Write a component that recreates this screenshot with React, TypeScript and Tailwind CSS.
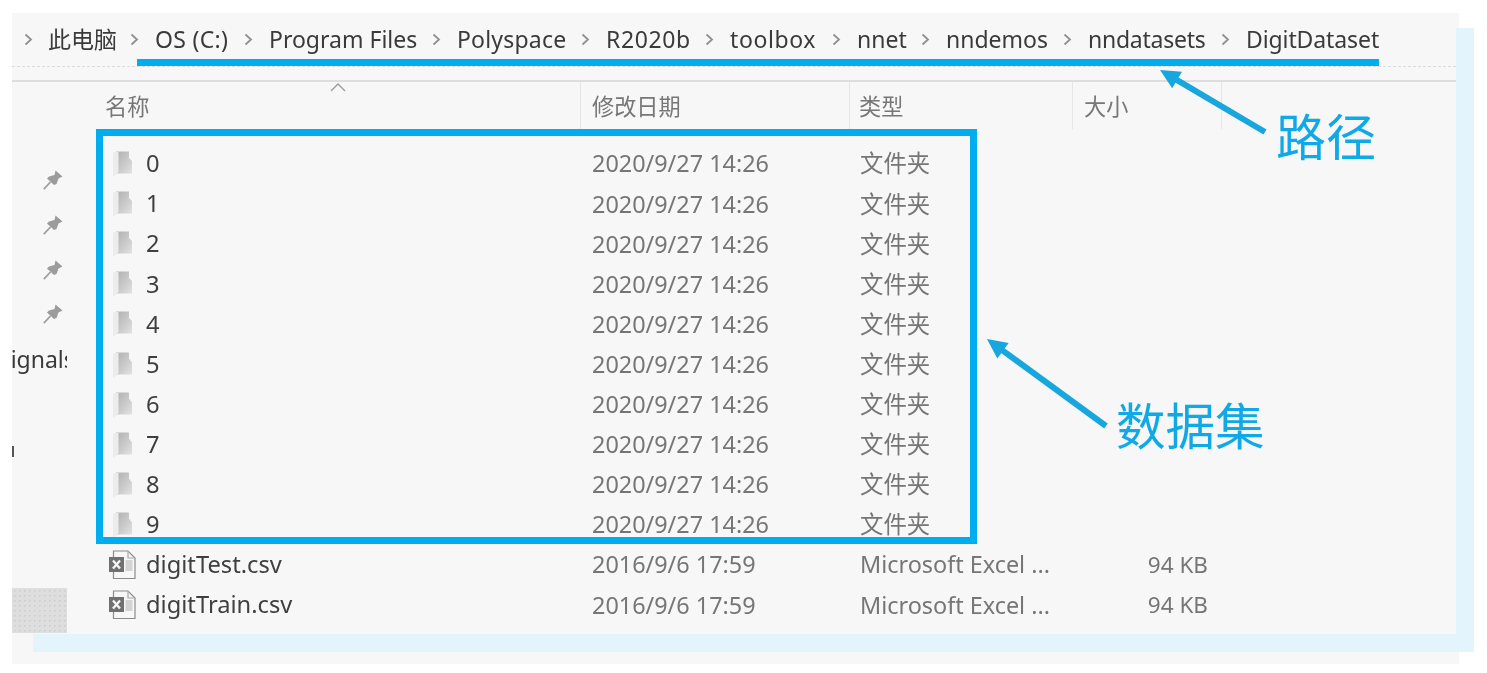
import React from "react";

const latin = "font-['Noto_Sans','Noto_Sans_CJK_SC',sans-serif]";

const crumbs = [
  { t: "此电脑", c: "w-[66.5px]" },
  { t: "OS (C:)", c: "w-[73.5px] tracking-[0.3px]" },
  { t: "Program Files", c: "w-[147.5px]" },
  { t: "Polyspace", c: "w-[108.5px] tracking-[0.2px]" },
  { t: "R2020b", c: "w-[83.5px] tracking-[0.6px]" },
  { t: "toolbox", c: "w-[86.5px] tracking-[0.6px]" },
  { t: "nnet", c: "w-[48.5px]" },
  { t: "nndemos", c: "w-[101.5px]" },
  { t: "nndatasets", c: "w-[117.5px] tracking-[-0.25px]" },
  { t: "DigitDataset", c: "w-[133px] tracking-[-0.1px]" },
];
const folders = ["0", "1", "2", "3", "4", "5", "6", "7", "8", "9"];

function Chevron() {
  return (
    <svg width="9" height="13" viewBox="0 0 9 13" className="shrink-0">
      <path d="M1.5 1.5 L7 6.5 L1.5 11.5" fill="none" stroke="#909090" strokeWidth="1.8" />
    </svg>
  );
}

function Pin() {
  return (
    <svg width="20" height="20" viewBox="0 0 20 20">
      <path d="M0.8 19.2 L7.5 12" stroke="#a0a0a0" strokeWidth="1.8" fill="none" />
      <path d="M12.5 0.5 L19.5 6.5 L15.5 8.5 L13.5 14 L11 15 L4 8.5 L6 6.5 L11.5 5 Z" fill="#9c9c9c" />
    </svg>
  );
}

function FolderIcon() {
  return (
    <svg width="20" height="26" viewBox="0 0 20 26">
      <defs>
        <linearGradient id="fb" x1="0" y1="0" x2="1" y2="1">
          <stop offset="0" stopColor="#b0b0b0" />
          <stop offset="0.55" stopColor="#cacaca" />
          <stop offset="1" stopColor="#e2e2e2" />
        </linearGradient>
      </defs>
      <path d="M3 0.5 H16 V7 L19 10 V22.5 H3 Z" fill="url(#fb)" />
      <path d="M0 1.5 L5.5 0.5 V21 L1 25.5 H0 Z" fill="#ececec" />
    </svg>
  );
}

function ExcelIcon() {
  return (
    <svg width="27" height="30" viewBox="0 0 27 30">
      <path d="M4.5 8 V1 H19 L26 8 V28.5 H4.5 V21" fill="none" stroke="#8c8c8c" strokeWidth="1.2" />
      <path d="M19 1 V8 H26" fill="none" stroke="#a8a8a8" strokeWidth="1.2" />
      <rect x="0" y="7" width="15" height="15" fill="#707070" />
      <path d="M4 10.5 L11 18.5 M11 10.5 L4 18.5" stroke="#f4f4f4" strokeWidth="2.4" />
      <rect x="16.5" y="10" width="7" height="11" fill="#d4d4d4" />
    </svg>
  );
}

function Row({ name, date, type, size, file }: { name: string; date: string; type: string; size?: string; file?: boolean }) {
  return (
    <div className="flex h-[40.1px] items-center text-[23.4px] text-[#767676]">
      <div className={file ? "flex w-[50px] shrink-0 items-center pl-[13px]" : "flex w-[50px] shrink-0 items-center pl-[17px]"}>
        {file ? <ExcelIcon /> : <FolderIcon />}
      </div>
      <div className="w-[446px] shrink-0 text-[23.7px] text-[#3f3f3f]">{name}</div>
      <div className="w-[268px] shrink-0">{date}</div>
      <div className="w-[214px] shrink-0 whitespace-nowrap">{type}</div>
      <div className="w-[134px] shrink-0 text-right text-[22.5px]">{size}</div>
    </div>
  );
}

function HeaderCell({ label, cellClass }: { label: string; cellClass: string }) {
  return (
    <div className={`${cellClass} flex h-[47px] shrink-0 items-start border-r border-[#e6e6e6] pt-[8px] text-[22.2px] text-[#777777]`}>
      {label}
    </div>
  );
}

function Arrow({ x1, y1, x2, y2 }: { x1: number; y1: number; x2: number; y2: number }) {
  const a = Math.atan2(y2 - y1, x2 - x1);
  const len = 22;
  const spread = 0.45;
  const p1 = `${x2 - len * Math.cos(a - spread)},${y2 - len * Math.sin(a - spread)}`;
  const p2 = `${x2 - len * Math.cos(a + spread)},${y2 - len * Math.sin(a + spread)}`;
  return (
    <g>
      <line x1={x1} y1={y1} x2={x2 - 12 * Math.cos(a)} y2={y2 - 12 * Math.sin(a)} stroke="#17a6dd" strokeWidth="6" />
      <polygon points={`${x2},${y2} ${p1} ${p2}`} fill="#17a6dd" />
    </g>
  );
}

export default function App() {
  return (
    <div className={`relative h-[673px] w-[1487px] overflow-hidden bg-white ${latin}`}>
      <div className="relative ml-3 mt-[13px] h-[651px] w-[1447px] bg-[#f7f7f7]">
        {/* pale blue backing card */}
        <div className="absolute left-[21px] top-[15px] h-[624px] w-[1441px] bg-[#e3f4fc]" />
        <div className="absolute left-0 top-0 h-[621px] w-[1444px] bg-[#f7f7f7]" />

        <div className="relative flex h-[621px] w-[1444px] flex-col blur-[0.45px]">
          {/* breadcrumb */}
          <div className="flex h-[54px] shrink-0 items-center whitespace-nowrap border-b border-dashed border-[#dcdcdc] pb-[1px] text-[23px] text-[#3a3a3a]">
            {crumbs.map((c, i) => (
              <React.Fragment key={c.t}>
                <div className={i === 0 ? "flex w-[36px] shrink-0 justify-center pr-[4px]" : "flex w-[40.5px] shrink-0 justify-center"}>
                  <Chevron />
                </div>
                <span className={`${c.c} shrink-0`}>{c.t}</span>
              </React.Fragment>
            ))}
          </div>
          {/* ribbon strip */}
          <div className="h-[15px] shrink-0 border-b-2 border-[#dedede]" />

          <div className="flex min-h-0 flex-1">
            {/* nav pane */}
            <div className="w-[84px] shrink-0 overflow-hidden">
              <div className="flex h-[342px] flex-col items-end pr-[33px] pt-[76px]">
                <div className="flex h-[44.7px] items-center"><Pin /></div>
                <div className="flex h-[44.7px] items-center"><Pin /></div>
                <div className="flex h-[44.7px] items-center"><Pin /></div>
                <div className="flex h-[44.7px] items-center"><Pin /></div>
              </div>
              <div className="-mt-[81px] h-[32px] w-[55px] overflow-hidden whitespace-nowrap text-[23px] leading-[32px] text-[#3a3a3a]">
                <span className="-ml-[14px] inline-block">Signals</span>
              </div>
              <div className="mt-[71px] h-[11px] w-[2px] bg-[#555555]" />
              <div className="mt-[131px] h-[45px] w-[55px] bg-[#dedede] bg-[radial-gradient(#d0d0d0_1px,transparent_1px)] bg-[length:5px_5px]" />
            </div>

            {/* file list */}
            <div className="min-w-0 flex-1">
              <div className="relative flex h-[62px] items-start">
                <HeaderCell label="名称" cellClass="w-[485px] pl-[9px]" />
                <HeaderCell label="修改日期" cellClass="w-[269px] pl-[11px]" />
                <HeaderCell label="类型" cellClass="w-[223px] pl-[9px]" />
                <HeaderCell label="大小" cellClass="w-[149px] pl-[11px]" />
                <svg width="16" height="9" viewBox="0 0 16 9" className="absolute left-[234px] top-[1px]">
                  <path d="M1 8 L8 1 L15 8" fill="none" stroke="#9a9a9a" strokeWidth="1.3" />
                </svg>
              </div>
              {folders.map((f) => (
                <Row key={f} name={f} date="2020/9/27 14:26" type="文件夹" />
              ))}
              <Row file name="digitTest.csv" date="2016/9/6 17:59" type="Microsoft Excel ..." size="94 KB" />
              <Row file name="digitTrain.csv" date="2016/9/6 17:59" type="Microsoft Excel ..." size="94 KB" />
            </div>
          </div>
        </div>

        {/* annotations over the screenshot */}
        <div className="absolute left-[125px] top-[46px] h-[7px] w-[1242px] bg-[#00aeef]" />
        <div className="absolute left-[84px] top-[116px] h-[415px] w-[881px] border-[7px] border-[#00aeef]" />
        <svg className="absolute left-0 top-0" width="1447" height="651" viewBox="0 0 1447 651">
          <Arrow x1={1253} y1={119} x2={1148} y2={57} />
          <Arrow x1={1094} y1={413} x2={975} y2={326} />
        </svg>
        <div className="absolute left-[1264px] top-[92px] text-[50px] leading-[64px] text-[#0ea9e6]">路径</div>
        <div className="absolute left-[1104px] top-[381px] text-[49.5px] leading-[64px] text-[#0ea9e6]">数据集</div>
      </div>
    </div>
  );
}
